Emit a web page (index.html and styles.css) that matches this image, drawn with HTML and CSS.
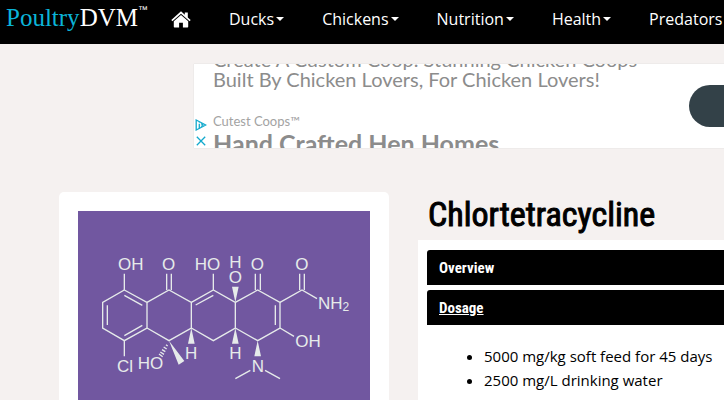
FILE: index.html
```html
<!DOCTYPE html>
<html lang="en">
<head>
<meta charset="utf-8">
<title>Chlortetracycline - PoultryDVM</title>
<link rel="stylesheet" href="styles.css">
</head>
<body>
<header class="navbar">
  <a class="logo" href="#"><span class="logo-accent">Poultry</span>DVM<sup class="logo-tm">™</sup></a>
  <nav class="menu">
    <a class="menu-home" href="#" aria-label="Home">
      <svg class="home-icon" viewBox="0 0 20 17" aria-hidden="true"><path d="M10 0.3 13.8 3.7V1.4H16.8V6.4L19.7 9 18.6 10.2 10 2.7 1.4 10.2 0.3 9Z"/><path d="M10 4 17.2 10.3V15.8Q17.2 16.5 16.5 16.5H11.9V11.8H8.1V16.5H3.5Q2.8 16.5 2.8 15.8V10.3Z"/></svg>
    </a>
    <a class="menu-item" href="#">Ducks<span class="caret"></span></a>
    <a class="menu-item" href="#">Chickens<span class="caret"></span></a>
    <a class="menu-item" href="#">Nutrition<span class="caret"></span></a>
    <a class="menu-item" href="#">Health<span class="caret"></span></a>
    <a class="menu-item" href="#">Predators<span class="caret"></span></a>
  </nav>
</header>

<aside class="ad">
  <div class="ad-badges">
    <svg class="ad-icon" viewBox="0 0 12 12" aria-hidden="true"><path d="M1.2 1 10.8 6 1.2 11Z"/><path d="M4.3 4.8V9.4M4.3 2.8V3.6M6 4.4 8 6 6 7.6"/></svg>
    <svg class="ad-icon" viewBox="0 0 12 12" aria-hidden="true"><path d="M1.8 1.8 10.2 10.2M10.2 1.8 1.8 10.2"/></svg>
  </div>
  <div class="ad-copy">
    <p class="ad-text">Create A Custom Coop. Stunning Chicken Coops<br>Built By Chicken Lovers, For Chicken Lovers!</p>
    <p class="ad-brand">Cutest Coops™</p>
    <p class="ad-title">Hand Crafted Hen Homes</p>
  </div>
  <a class="ad-button" href="#" aria-label="Open"></a>
</aside>

<main class="content">
  <figure class="card">
    <svg class="molecule" viewBox="84 79 876 876" role="img" aria-label="Chlortetracycline structure">
      <g class="bonds">
        <path d="M223 316 291 353V430L223 468 158 430V353ZM223 332 277 362M172 362V421M223 453 277 422"/>
        <path d="M223 316V267M223 468V515"/>
        <path d="M291 353 357 316 424 353V430L357 468 291 430M350 316V267M364 316V267"/>
        <path d="M424 353 490 316 556 353V430L490 468 424 430M437 361 490 332M490 316V267"/>
        <path d="M556 353 623 316 690 353V430L623 468 556 430M616 316V267M631 316V267M676 362V421"/>
        <path d="M690 353 756 316 801 342M749 316V267M763 316V267M690 430 732 455"/>
        <path d="M601 557 556 582M645 557 690 582"/>
        <path d="M348 480 353 484M341 487 350 493M336 495 346 501M331 502 342 509M327 508 338 516"/>
      </g>
      <path class="wedge" d="M357 468 403 529 386 540ZM424 430 434 477H414ZM556 353 546 306H566ZM556 430 566 477H546ZM623 468 633 515H613Z"/>
      <g class="atoms">
        <text x="204" y="257">OH</text>
        <text x="336" y="257">O</text>
        <text x="434" y="257">HO</text>
        <text x="538" y="251">H</text>
        <text x="536" y="295">O</text>
        <text x="602" y="257">O</text>
        <text x="736" y="257">O</text>
        <text x="804" y="372">NH<tspan class="sub" dy="8">2</tspan></text>
        <text x="736" y="486">OH</text>
        <text x="201" y="562">Cl</text>
        <text x="263" y="553">HO</text>
        <text x="405" y="524">H</text>
        <text x="538" y="524">H</text>
        <text x="605" y="562">N</text>
      </g>
    </svg>
  </figure>
  <article class="drug">
    <h1 class="drug-name">Chlortetracycline</h1>
    <div class="panels">
      <button class="panel-head" type="button">Overview</button>
      <button class="panel-head panel-head-active" type="button">Dosage</button>
      <ul class="dosage">
        <li>5000 mg/kg soft feed for 45 days</li>
        <li>2500 mg/L drinking water</li>
      </ul>
    </div>
  </article>
</main>
</body>
</html>
```
FILE: styles.css
```css
* {
  box-sizing: border-box;
}

body {
  margin: 0;
  overflow-x: hidden;
  background: #f5f1f0;
  color: #000;
  font-family: "Open Sans", "Noto Sans", sans-serif;
  font-size: 15px;
  line-height: 24px;
}

a {
  color: inherit;
  text-decoration: none;
}

.navbar {
  display: flex;
  align-items: flex-start;
  height: 44px;
  padding-left: 6px;
  overflow: hidden;
  background: #000;
  color: #fff;
  white-space: nowrap;
}

.logo {
  display: flex;
  flex: 0 0 146px;
  font-family: "Liberation Serif", serif;
  font-size: 25px;
  line-height: 36px;
}

.logo-accent {
  color: #0bb4d8;
}

.logo-tm {
  font-family: "Liberation Sans", sans-serif;
  font-size: 10px;
  line-height: 20px;
}

.menu {
  display: flex;
  flex: none;
  font-size: 16px;
  line-height: 36px;
}

.menu-home {
  display: flex;
  align-items: center;
  height: 38px;
  padding: 0 19px;
}

.home-icon {
  width: 20px;
  height: 17px;
  fill: #fff;
}

.menu-item {
  display: flex;
  align-items: center;
  gap: 2px;
  padding: 0 19px;
}

.caret {
  border: 4px solid transparent;
  border-top-color: #fff;
  border-bottom: 0;
}

.ad {
  position: relative;
  display: flex;
  width: 728px;
  height: 84px;
  margin: 20px 0 0 194px;
  overflow: hidden;
  background: #fff;
  box-shadow: 0 0 1px #ccc;
}

.ad-badges {
  display: flex;
  flex-direction: column;
  justify-content: flex-end;
  gap: 4px;
  width: 19px;
  padding: 0 0 1px 1px;
}

.ad-icon {
  width: 12px;
  height: 12px;
  fill: none;
  stroke: #12a9cc;
  stroke-width: 1.3;
}

.ad-copy {
  display: flex;
  flex-direction: column;
  justify-content: center;
  padding-bottom: 8px;
  color: #8c8c8c;
  font-family: Lato, sans-serif;
  white-space: nowrap;
}

.ad-copy p {
  margin: 0;
}

.ad-text {
  font-size: 20px;
  line-height: 20px;
}

.ad-copy .ad-brand {
  margin-top: 22px;
  color: #a3a3a3;
  font-size: 13px;
  line-height: 20px;
}

.ad-title {
  font-size: 25px;
  font-weight: 700;
  line-height: 24px;
}

.ad-button {
  position: absolute;
  top: 21px;
  left: 495px;
  width: 180px;
  height: 42px;
  border-radius: 21px;
  background: #334148;
}

.content {
  display: grid;
  grid-template-columns: minmax(0, 330px) minmax(0, 1fr);
  align-items: start;
  gap: 29px;
  margin-top: 44px;
  padding-left: 59px;
}

.card {
  margin: 0;
  padding: 19px;
  border-radius: 5px;
  background: #fff;
}

.molecule {
  display: block;
  width: 100%;
  background: #7157a0;
}

.bonds {
  fill: none;
  stroke: #e6ebea;
  stroke-width: 4;
}

.wedge {
  fill: #e6ebea;
}

.atoms {
  fill: #e6ebea;
  font-family: "Liberation Sans", sans-serif;
  font-size: 51px;
}

.sub {
  font-size: 36px;
}

.drug-name {
  margin: 0;
  padding: 0 0 4px 10px;
  font-family: "Roboto Condensed", Roboto, sans-serif;
  font-size: 34px;
  font-weight: 400;
  line-height: 44px;
  -webkit-text-stroke: 1px currentColor;
}

.panels {
  display: flex;
  flex-direction: column;
  gap: 5px;
  min-height: 240px;
  padding: 10px 0 10px 9px;
  background: #fff;
}

.panel-head {
  height: 35px;
  padding: 0 12px;
  border: 0;
  border-radius: 3px 0 0 0;
  background: #000;
  color: #fff;
  font-family: "Roboto Condensed", Roboto, sans-serif;
  font-size: 15px;
  font-weight: 700;
  text-align: left;
}

.panel-head-active {
  text-decoration: underline;
}

.dosage {
  margin: 14px 0;
  padding-left: 57px;
}
```
